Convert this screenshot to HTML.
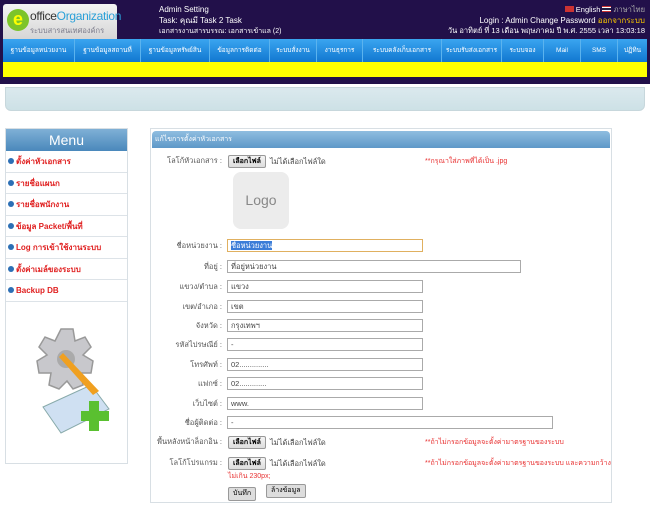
<!DOCTYPE html>
<html><head><meta charset="utf-8"><style>
*{margin:0;padding:0;box-sizing:border-box}
body{width:650px;height:507px;background:#fff;font-family:"Liberation Sans","Noto Sans CJK SC",sans-serif;position:relative;overflow:hidden;font-size:9px}
.a{position:absolute}
#hdr{left:0;top:0;width:650px;height:84px;background:#22104a}
#logo{left:3px;top:4px;width:114px;height:35px;background:linear-gradient(#f4f4f4,#d6d6d6);border-radius:3px 3px 0 0}
#nav{left:3px;top:39px;width:644px;height:23px;background:linear-gradient(#3aa5f0,#1177d0);display:flex}
#nav div{color:#fff;font-size:6.5px;line-height:23px;text-align:center;border-right:1px solid #5bb3ee;white-space:nowrap;overflow:hidden;flex:none}
#yel{left:3px;top:62px;width:644px;height:15px;background:#ffff00}
#band{left:5px;top:87px;width:640px;height:24px;background:linear-gradient(#dbe9ee,#cde1e6);border-radius:0 0 6px 6px;border:1px solid #c7d7dc}
#menu{left:5px;top:128px;width:123px;height:336px;border:1px solid #d8dfe4}
#mh{height:22px;background:linear-gradient(#7fb0d6,#4a88bb);color:#fff;font-size:14px;text-align:center;line-height:22px}
.mi{height:21.5px;border-bottom:1px solid #dde3e8;color:#e02020;font-weight:bold;font-size:8px;line-height:21px;padding-left:2px}
.mi b{display:inline-block;width:6px;height:6px;border-radius:50%;background:#2c6fb5;margin-right:2px}
#pan{left:150px;top:128px;width:462px;height:375px;border:1px solid #d8dfe4}
#pt{left:152px;top:131px;width:458px;height:17px;background:linear-gradient(#8fbde0,#5e98c8);color:#fff;font-size:7px;line-height:17px;padding-left:3px;border-radius:4px 4px 0 0}
.lb{position:absolute;right:428px;font-size:7.5px;line-height:10px;color:#555;text-align:right;white-space:nowrap}
.in{position:absolute;left:227px;height:13px;border:1px solid #aaa;font-size:7.5px;color:#444;padding-left:3px;line-height:11px;background:#fff}
.bt{position:absolute;left:228px;height:13px;padding:0 4px;border:1px solid #999;background:linear-gradient(#f4f4f4,#ddd);font-size:7px;line-height:11px;font-weight:bold;border-radius:2px}
.nf{position:absolute;left:270px;font-size:7.5px;line-height:10px;color:#444}
.rd{position:absolute;color:#e83030;font-size:7px;line-height:10px}
</style></head><body>
<div class="a" id="hdr"></div>
<div class="a" id="logo">
 <div class="a" style="left:4px;top:5px;width:22px;height:22px;border-radius:50%;background:#7cc42a;color:#ff0;font-weight:bold;font-size:18px;text-align:center;line-height:20px">e</div>
 <div class="a" style="left:27px;top:5px;font-size:12px;color:#333;white-space:nowrap;letter-spacing:-0.3px">office<span style="color:#2aa0d8">Organization</span></div>
 <div class="a" style="left:27px;top:21px;font-size:7.5px;color:#7a7a8a;white-space:nowrap">ระบบสารสนเทศองค์กร</div>
</div>
<div class="a" style="left:159px;top:5px;color:#fff;font-size:8px;line-height:10.5px">Admin Setting<br>Task: คุณมี Task 2 Task<br><span style="font-size:7px">เอกสารงานสารบรรณ: เอกสารเข้าแล (2)</span></div>
<div class="a" style="right:5px;top:5px;color:#fff;font-size:7.5px;line-height:10.5px;text-align:right;white-space:nowrap"><span style="display:inline-block;width:9px;height:6px;background:#c33"></span> English <span style="display:inline-block;width:9px;height:6px;background:linear-gradient(#c33 20%,#fff 20%,#fff 35%,#224 35%,#224 65%,#fff 65%,#fff 80%,#c33 80%)"></span> <span style="color:#aaa">ภาษาไทย</span><br><span style="font-size:8px">Login : Admin Change Password <span style="color:#f5c400">ออกจากระบบ</span></span><br>วัน อาทิตย์ ที่ 13 เดือน พฤษภาคม ปี พ.ศ. 2555 เวลา 13:03:18</div>
<div class="a" id="nav">
<div style="width:72px">ฐานข้อมูลหน่วยงาน</div><div style="width:66px">ฐานข้อมูลสถานที่</div><div style="width:69px">ฐานข้อมูลทรัพย์สิน</div><div style="width:60px">ข้อมูลการติดต่อ</div><div style="width:47px">ระบบสั่งงาน</div><div style="width:46px">งานธุรการ</div><div style="width:79px">ระบบคลังเก็บเอกสาร</div><div style="width:60px">ระบบรับส่งเอกสาร</div><div style="width:42px">ระบบจอง</div><div style="width:37px">Mail</div><div style="width:37px">SMS</div><div style="flex:1;border:0">ปฏิทิน</div>
</div>
<div class="a" id="yel"></div>
<div class="a" id="band"></div>
<div class="a" id="menu">
 <div id="mh">Menu</div>
 <div class="mi"><b></b>ตั้งค่าหัวเอกสาร</div>
 <div class="mi"><b></b>รายชื่อแผนก</div>
 <div class="mi"><b></b>รายชื่อพนักงาน</div>
 <div class="mi"><b></b>ข้อมูล Packet/พื้นที่</div>
 <div class="mi"><b></b>Log การเข้าใช้งานระบบ</div>
 <div class="mi"><b></b>ตั้งค่าเมล์ของระบบ</div>
 <div class="mi"><b></b>Backup DB</div>
 <svg class="a" style="left:15px;top:190px" width="95" height="130" viewBox="0 0 95 130">
  <path d="M40 10 L52 10 L54 22 L64 18 L70 28 L62 36 L72 42 L70 54 L60 54 L62 66 L52 70 L46 62 L38 70 L28 66 L30 54 L18 54 L16 42 L26 36 L18 28 L24 18 L34 22 Z" fill="#c8c8cc" stroke="#999" stroke-width="1.5"/>
  <circle cx="45" cy="40" r="9" fill="#aaa"/>
  <path d="M22 88 L70 66 L88 90 L40 114 Z" fill="#cfe0f2" stroke="#8aa" />
  <path d="M42 34 L78 72 L72 76 L38 38 Z" fill="#f0a020"/>
  <path d="M60 92 h8 v-10 h10 v10 h10 v10 h-10 v10 h-10 v-10 h-8 Z" fill="#5ac030"/>
 </svg>
</div>
<div class="a" id="pan"></div>
<div class="a" id="pt">แก้ไขการตั้งค่าหัวเอกสาร</div>

<div class="lb" style="top:156px">โลโก้หัวเอกสาร :</div>
<div class="bt" style="top:155px">เลือกไฟล์</div><div class="nf" style="top:157px">ไม่ได้เลือกไฟล์ใด</div>
<div class="rd" style="left:425px;top:157px">**กรุณาใส่ภาพที่ได้เป็น .jpg</div>
<div class="a" style="left:233px;top:172px;width:56px;height:57px;border-radius:8px;background:#ececec;color:#888;font-size:14px;text-align:center;line-height:57px">Logo</div>

<div class="lb" style="top:241px">ชื่อหน่วยงาน :</div>
<div class="in" style="top:239px;width:196px;border-color:#e0b060"><span style="background:#3b7dd8;color:#fff">ชื่อหน่วยงาน</span></div>
<div class="lb" style="top:262px">ที่อยู่ :</div><div class="in" style="top:260px;width:294px">ที่อยู่หน่วยงาน</div>
<div class="lb" style="top:282px">แขวง/ตำบล :</div><div class="in" style="top:280px;width:196px">แขวง</div>
<div class="lb" style="top:302px">เขต/อำเภอ :</div><div class="in" style="top:300px;width:196px">เขต</div>
<div class="lb" style="top:321px">จังหวัด :</div><div class="in" style="top:319px;width:196px">กรุงเทพฯ</div>
<div class="lb" style="top:340px">รหัสไปรษณีย์ :</div><div class="in" style="top:338px;width:196px">-</div>
<div class="lb" style="top:360px">โทรศัพท์ :</div><div class="in" style="top:358px;width:196px">02..............</div>
<div class="lb" style="top:379px">แฟกซ์ :</div><div class="in" style="top:377px;width:196px">02.............</div>
<div class="lb" style="top:399px">เว็บไซต์ :</div><div class="in" style="top:397px;width:196px">www.</div>
<div class="lb" style="top:418px">ชื่อผู้ติดต่อ :</div><div class="in" style="top:416px;width:326px">-</div>
<div class="lb" style="top:437px">พื้นหลังหน้าล็อกอิน :</div>
<div class="bt" style="top:436px">เลือกไฟล์</div><div class="nf" style="top:438px">ไม่ได้เลือกไฟล์ใด</div>
<div class="rd" style="left:425px;top:438px">**ถ้าไม่กรอกข้อมูลจะตั้งค่ามาตรฐานของระบบ</div>
<div class="lb" style="top:458px">โลโก้โปรแกรม :</div>
<div class="bt" style="top:457px">เลือกไฟล์</div><div class="nf" style="top:459px">ไม่ได้เลือกไฟล์ใด</div>
<div class="rd" style="left:425px;top:459px">**ถ้าไม่กรอกข้อมูลจะตั้งค่ามาตรฐานของระบบ และความกว้าง</div>
<div class="rd" style="left:228px;top:472px">ไม่เกิน 230px;</div>
<div class="bt" style="top:487px;height:14px;font-weight:normal;background:#ddd">บันทึก</div>
<div class="bt" style="left:266px;top:484px;height:14px;font-weight:normal;background:#ddd">ล้างข้อมูล</div>
</body></html>
